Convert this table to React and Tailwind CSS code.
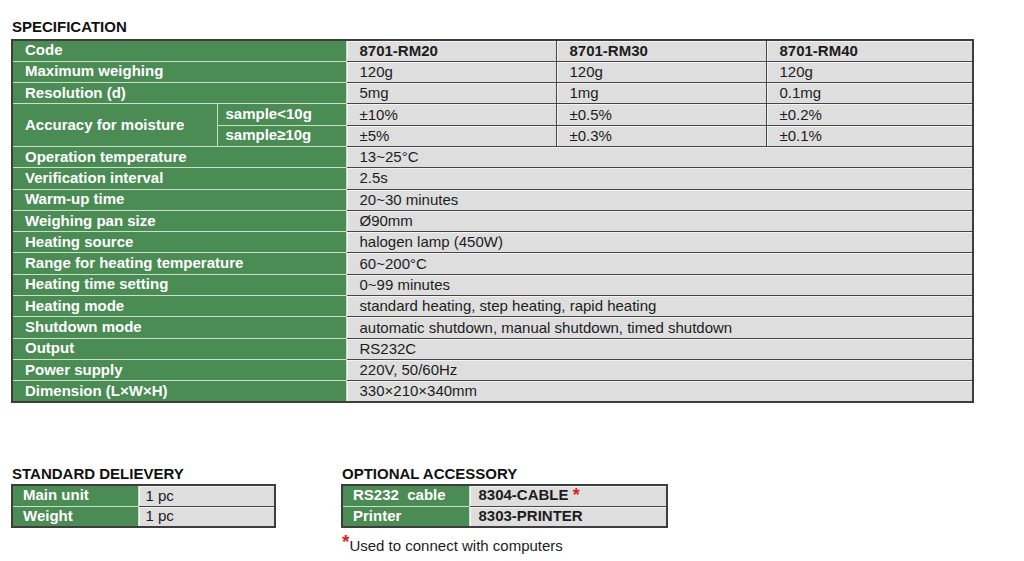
const specRows = [
  ['Maximum weighing', ['120g', '120g', '120g']],
  ['Resolution (d)', ['5mg', '1mg', '0.1mg']],
];

const sharedRows = [
  ['Operation temperature', '13~25°C'],
  ['Verification interval', '2.5s'],
  ['Warm-up time', '20~30 minutes'],
  ['Weighing pan size', 'Ø90mm'],
  ['Heating source', 'halogen lamp (450W)'],
  ['Range for heating temperature', '60~200°C'],
  ['Heating time setting', '0~99 minutes'],
  ['Heating mode', 'standard heating, step heating, rapid heating'],
  ['Shutdown mode', 'automatic shutdown, manual shutdown, timed shutdown'],
  ['Output', 'RS232C'],
  ['Power supply', '220V, 50/60Hz'],
  ['Dimension (L×W×H)', '330×210×340mm'],
];

const green = 'bg-[#4b8b54] text-white font-bold border border-[#c9dfc9] leading-none pb-[2px]';
const gray = 'bg-[#dedede] text-[#1c1c1c] border border-[#454545] leading-none pb-[1px] shadow-[inset_1px_1px_0_#f3f3f3]';

export default function App() {
  return (
    <div className="w-[1024px] h-[561px] bg-white pl-[11px] pt-[18px] font-['Liberation_Sans',Arial,sans-serif] text-[15px] overflow-hidden">
      <h2 className="text-[15px] leading-[17px] font-bold text-[#111] pl-[1px]">SPECIFICATION</h2>
      <table className="mt-[4px] w-[961px] table-fixed border-collapse border-2 border-[#3d3d3d]">
        <colgroup>
          <col className="w-[205px]" />
          <col className="w-[129px]" />
          <col className="w-[210px]" />
          <col className="w-[210px]" />
          <col className="w-[207px]" />
        </colgroup>
        <tbody>
          <tr className="h-[21.3px]">
            <td colSpan={2} className={`${green} pl-[12px]`}>Code</td>
            {['8701-RM20', '8701-RM30', '8701-RM40'].map((c) => (
              <td key={c} className={`${gray} pl-[13px] font-bold`}>{c}</td>
            ))}
          </tr>
          {specRows.map(([label, vals]) => (
            <tr key={label} className="h-[21.3px]">
              <td colSpan={2} className={`${green} pl-[12px]`}>{label}</td>
              {vals.map((v, i) => (
                <td key={i} className={`${gray} pl-[13px]`}>{v}</td>
              ))}
            </tr>
          ))}
          <tr className="h-[21.3px]">
            <td rowSpan={2} className={`${green} pl-[12px]`}>Accuracy for moisture</td>
            <td className={`${green} pl-[8px]`}>sample&lt;10g</td>
            {['±10%', '±0.5%', '±0.2%'].map((v, i) => (
              <td key={i} className={`${gray} pl-[13px]`}>{v}</td>
            ))}
          </tr>
          <tr className="h-[21.3px]">
            <td className={`${green} pl-[8px]`}>sample≥10g</td>
            {['±5%', '±0.3%', '±0.1%'].map((v, i) => (
              <td key={i} className={`${gray} pl-[13px]`}>{v}</td>
            ))}
          </tr>
          {sharedRows.map(([label, val]) => (
            <tr key={label} className="h-[21.3px]">
              <td colSpan={2} className={`${green} pl-[12px]`}>{label}</td>
              <td colSpan={3} className={`${gray} pl-[13px]`}>{val}</td>
            </tr>
          ))}
        </tbody>
      </table>

      <div className="flex gap-[65px] mt-[62px]">
        <div>
          <h2 className="text-[15px] leading-[17px] font-bold text-[#111] pl-[1px]">STANDARD DELIEVERY</h2>
          <table className="mt-[2px] w-[263px] table-fixed border-collapse border-2 border-[#3d3d3d]">
            <colgroup>
              <col className="w-[126px]" />
              <col className="w-[137px]" />
            </colgroup>
            <tbody>
              {[['Main unit', '1 pc'], ['Weight', '1 pc']].map(([l, v]) => (
                <tr key={l} className="h-[21px]">
                  <td className={`${green} pl-[10px]`}>{l}</td>
                  <td className={`${gray} pl-[7px]`}>{v}</td>
                </tr>
              ))}
            </tbody>
          </table>
        </div>
        <div>
          <h2 className="text-[15px] leading-[17px] font-bold text-[#111] pl-[1px]">OPTIONAL ACCESSORY</h2>
          <table className="mt-[2px] w-[325px] table-fixed border-collapse border-2 border-[#3d3d3d]">
            <colgroup>
              <col className="w-[127px]" />
              <col className="w-[198px]" />
            </colgroup>
            <tbody>
              <tr className="h-[21px]">
                <td className={`${green} pl-[10px]`}>RS232&nbsp; cable</td>
                <td className={`${gray} pl-[9px] font-bold`}>
                  8304-CABLE <span className="text-[#e02020] text-[18px] align-[-1px]">*</span>
                </td>
              </tr>
              <tr className="h-[21px]">
                <td className={`${green} pl-[10px]`}>Printer</td>
                <td className={`${gray} pl-[9px] font-bold`}>8303-PRINTER</td>
              </tr>
            </tbody>
          </table>
          <p className="mt-[4px] pl-[1px] text-[15px] leading-[17px] text-[#1c1c1c]">
            <span className="text-[#e02020] font-bold text-[19px] align-[3px] leading-none">*</span>Used to connect with computers
          </p>
        </div>
      </div>
    </div>
  );
}
